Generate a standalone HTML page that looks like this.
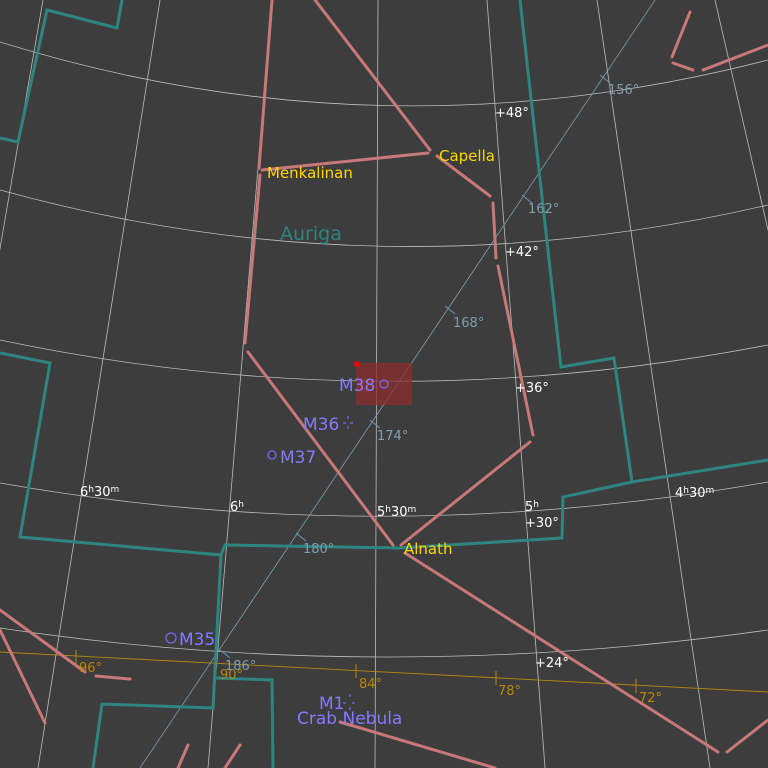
<!DOCTYPE html><html><head><style>body{margin:0;background:#3d3d3d}svg{display:block}text{font-family:"DejaVu Sans","Liberation Sans",sans-serif}</style></head><body>
<svg width="768" height="768" viewBox="0 0 768 768">
<rect width="768" height="768" fill="#3d3d3d"/>
<g fill="none" stroke="#bdbdbd" stroke-width="0.8">
<path d="M0,42 Q380,160 768,60"/>
<path d="M0,190 Q380,295 768,205"/>
<path d="M0,340 Q380,420 768,345"/>
<path d="M0,483 Q380,550 768,482"/>
<path d="M0,628 Q380,685 768,630"/>
<path d="M43,0 L-90,768"/><path d="M160,0 L38,768"/><path d="M272,0 L208,768"/><path d="M378,0 L375,768"/><path d="M487,0 L545,768"/><path d="M597,0 L710,768"/><path d="M715,0 L768,230"/>
</g>
<path d="M0,652 L768,692" stroke="#b8860b" stroke-width="0.9"/>
<path d="M140,768 L655,0" stroke="#7f9fae" stroke-width="0.8"/>
<g stroke="#6f98a8" stroke-width="1"><path d="M600,75l10,8M522,195l10,8M445,306l10,8M370,420l10,8M296,533l10,8M220,650l10,8"/></g>
<g stroke="#b8860b" stroke-width="1"><path d="M76,650v14M216,657v14M356,664v14M496,671v14M636,679v14"/></g>
<g fill="none" stroke="#c87878" stroke-width="3" stroke-linecap="round">
<path d="M272,0L259,168M262,170L428,153M315,0L430,150M437,156L490,196M493,203L496,258M498,266L533,435M530,442L401,545M260,175L245,343M248,352L393,545M405,553L718,752M727,752L768,720M690,12L672,57M673,63L693,70M703,70L768,45M0,610L85,672M0,630L45,723M96,676L130,679M188,745L178,768M240,745L225,768M340,722L495,768"/>
</g>
<g fill="none" stroke="#2e8580" stroke-width="3">
<path d="M0,138L18,142L47,10L117,28L122,0"/>
<path d="M520,0L561,367L614,358L632,482L768,460"/>
<path d="M632,482L563,497L562,538L400,548L225,545L221,555L20,537L50,363L0,353"/>
<path d="M221,555L213,708L102,704L93,768"/>
<path d="M216,678L272,680L273,768"/>
</g>
<rect x="356" y="363" width="56" height="42" fill="#8b2e2e" opacity="0.75"/>
<circle cx="357" cy="364" r="3" fill="#e00"/>
<g fill="none" stroke="#7b68ee" stroke-width="1.3"><circle cx="384" cy="384" r="4"/><circle cx="272" cy="455" r="4"/><circle cx="171" cy="638" r="5"/></g>
<g stroke="#7b68ee" stroke-width="1.2"><path d="M343,423h3M350,423h3M348,416v3M348,426v3M343,703h3M352,703h3M350,694v3M350,707v3"/></g>
<g font-size="17" fill="#8878ff"><text x="339" y="391">M38</text><text x="303" y="430">M36</text><text x="280" y="463">M37</text><text x="179" y="645">M35</text><text x="319" y="709">M1</text><text x="297" y="724">Crab Nebula</text></g>
<g font-size="15" fill="#ffd700"><text x="267" y="178">Menkalinan</text><text x="439" y="161">Capella</text><text x="404" y="554">Alnath</text></g>
<text x="280" y="240" font-size="19" fill="#2e8580">Auriga</text>
<g font-size="13" fill="#fff"><text x="495" y="117">+48°</text><text x="505" y="256">+42°</text><text x="515" y="392">+36°</text><text x="525" y="527">+30°</text><text x="535" y="667">+24°</text>
<text x="80" y="496">6<tspan font-size="9" dy="-4">h</tspan><tspan dy="4">30</tspan><tspan font-size="9" dy="-4">m</tspan></text>
<text x="230" y="511">6<tspan font-size="9" dy="-4">h</tspan></text>
<text x="377" y="516">5<tspan font-size="9" dy="-4">h</tspan><tspan dy="4">30</tspan><tspan font-size="9" dy="-4">m</tspan></text>
<text x="525" y="511">5<tspan font-size="9" dy="-4">h</tspan></text>
<text x="675" y="497">4<tspan font-size="9" dy="-4">h</tspan><tspan dy="4">30</tspan><tspan font-size="9" dy="-4">m</tspan></text></g>
<g font-size="13" fill="#7f9fae"><text x="608" y="94">156°</text><text x="528" y="213">162°</text><text x="453" y="327">168°</text><text x="377" y="440">174°</text><text x="303" y="553">180°</text><text x="225" y="670">186°</text></g>
<g font-size="13" fill="#b8860b"><text x="79" y="672">96°</text><text x="220" y="679">90°</text><text x="359" y="688">84°</text><text x="498" y="695">78°</text><text x="639" y="702">72°</text></g>
</svg></body></html>
